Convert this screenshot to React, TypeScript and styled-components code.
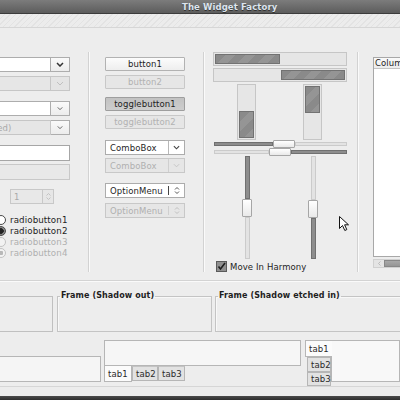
import React from "react";
import styled, { createGlobalStyle } from "styled-components";

const Global = createGlobalStyle`
  html, body { margin: 0; padding: 0; }
  body {
    width: 400px; height: 400px; overflow: hidden; background: #ededed;
    font-family: "DejaVu Sans", "Liberation Sans", sans-serif;
  }
`;

const Window = styled.div`
  position: relative;
  width: 400px;
  height: 400px;
  overflow: hidden;
  display: flex;
  flex-direction: column;
  background: #ededed;
  font-size: 8.5px;
  letter-spacing: 0.1px;
  color: #1e1e1e;
`;

const TitleBar = styled.div`
  flex: none;
  height: 13px;
  border-bottom: 1px solid #3c3c3c;
  background: linear-gradient(#7c7c7c, #5c5c5c);
  display: flex;
  align-items: center;
  padding-left: 182px;
  font-weight: bold;
  font-size: 8.5px;
  color: #dde5ee;
  text-shadow: 0 1px 0 #303030;
`;

const Stripe = styled.div`
  flex: none;
  height: 13px;
  border-bottom: 1px solid #d6d6d6;
  background: repeating-linear-gradient(135deg, #ececec 0 3px, #e3e3e3 3px 4px);
`;

const Body = styled.div`
  flex: none;
  display: flex;
  flex-direction: column;
  margin-left: -35px;
`;

const TopRow = styled.div`
  margin-top: 24px;
  height: 220px;
  display: flex;
  align-items: stretch;
`;

const Column = styled.div<{ $w: number; $pt: number }>`
  flex: none;
  width: ${(p) => p.$w}px;
  padding-top: ${(p) => p.$pt}px;
  display: flex;
  flex-direction: column;
`;

const VSep = styled.div<{ $ml: number; $mr: number }>`
  flex: none;
  width: 1px;
  background: #d2d2d2;
  border-right: 1px solid #fafafa;
  margin: 0 ${(p) => p.$mr}px 0 ${(p) => p.$ml}px;
`;

/* ---------- left column ---------- */

const ComboWrap = styled.div<{ $mt?: number }>`
  display: flex;
  height: 15px;
  margin-top: ${(p) => p.$mt ?? 0}px;
`;

const ComboField = styled.div<{ $dis?: boolean }>`
  flex: 1;
  box-sizing: border-box;
  border: 1px solid ${(p) => (p.$dis ? "#c6c6c6" : "#adadad")};
  background: ${(p) => (p.$dis ? "#e6e6e6" : "#ffffff")};
  color: ${(p) => (p.$dis ? "#a9a9a9" : "#1e1e1e")};
  display: flex;
  align-items: center;
  padding-left: 2px;
  white-space: nowrap;
  overflow: hidden;
`;

const ComboBtn = styled.div<{ $dis?: boolean }>`
  flex: none;
  width: 19px;
  box-sizing: border-box;
  border: 1px solid ${(p) => (p.$dis ? "#c6c6c6" : "#adadad")};
  border-left: none;
  background: ${(p) => (p.$dis ? "#e4e4e4" : "linear-gradient(#fafafa, #ececec)")};
  display: flex;
  align-items: center;
  justify-content: center;
`;

const Entry = styled.div<{ $dis?: boolean; $mt: number }>`
  height: 16px;
  box-sizing: border-box;
  margin-top: ${(p) => p.$mt}px;
  border: 1px solid ${(p) => (p.$dis ? "#c8c8c8" : "#a6a6a6")};
  background: ${(p) => (p.$dis ? "#e8e8e8" : "#ffffff")};
`;

const Spin = styled.div`
  margin: 9px 0 0 45px;
  width: 44px;
  height: 15px;
  display: flex;
`;

const SpinField = styled.div`
  flex: 1;
  box-sizing: border-box;
  border: 1px solid #c8c8c8;
  background: #e8e8e8;
  color: #aaaaaa;
  padding-left: 3px;
  display: flex;
  align-items: center;
`;

const SpinBtns = styled.div`
  flex: none;
  width: 11px;
  box-sizing: border-box;
  border: 1px solid #c8c8c8;
  border-left: none;
  background: #e6e6e6;
  display: flex;
  flex-direction: column;
  align-items: center;
  justify-content: center;
  gap: 1px;
`;

const Radios = styled.div`
  margin: 10px 0 0 31px;
  display: flex;
  flex-direction: column;
`;

const RadioRow = styled.div<{ $dis?: boolean }>`
  height: 11px;
  display: flex;
  align-items: center;
  gap: 4px;
  color: ${(p) => (p.$dis ? "#b0b0b0" : "#1e1e1e")};
  font-size: 8.7px;
`;

const RadioDot = styled.div<{ $on?: boolean; $dis?: boolean }>`
  flex: none;
  width: 10px;
  height: 10px;
  box-sizing: border-box;
  border-radius: 50%;
  border: 1px solid ${(p) => (p.$dis ? "#c2c2c2" : "#4a4a4a")};
  background: ${(p) =>
    p.$on
      ? p.$dis
        ? "radial-gradient(circle, #b8b8b8 0 2px, #f2f2f2 2.5px)"
        : "radial-gradient(circle, #222 0 2.5px, #8a8a8a 3px)"
      : p.$dis
      ? "#f2f2f2"
      : "#ffffff"};
`;

/* ---------- middle column ---------- */

const Button = styled.div<{ $kind?: "dis" | "pressed"; $mt: number }>`
  height: 14px;
  box-sizing: border-box;
  margin-top: ${(p) => p.$mt}px;
  border: 1px solid
    ${(p) => (p.$kind === "dis" ? "#c8c8c8" : p.$kind === "pressed" ? "#9e9e9e" : "#b2b2b2")};
  border-radius: 1px;
  background: ${(p) =>
    p.$kind === "dis"
      ? "#e6e6e6"
      : p.$kind === "pressed"
      ? "linear-gradient(#c2c2c2, #cdcdcd)"
      : "linear-gradient(#fcfcfc, #eeeeee)"};
  color: ${(p) => (p.$kind === "dis" ? "#b2b2b2" : "#1e1e1e")};
  display: flex;
  align-items: center;
  justify-content: center;
`;

const Picker = styled.div<{ $dis?: boolean; $mt: number }>`
  height: 15px;
  box-sizing: border-box;
  margin-top: ${(p) => p.$mt}px;
  border: 1px solid ${(p) => (p.$dis ? "#c8c8c8" : "#acacac")};
  background: ${(p) => (p.$dis ? "#e6e6e6" : "#ffffff")};
  color: ${(p) => (p.$dis ? "#b0b0b0" : "#1e1e1e")};
  display: flex;
  align-items: center;
`;

const PickerText = styled.div`
  flex: 1;
  padding-left: 4px;
  white-space: nowrap;
  overflow: hidden;
`;

const PickerArrow = styled.div<{ $dis?: boolean; $full?: boolean }>`
  flex: none;
  width: 15px;
  align-self: ${(p) => (p.$full ? "stretch" : "center")};
  height: ${(p) => (p.$full ? "auto" : "9px")};
  border-left: 1px solid ${(p) => (p.$dis ? "#cfcfcf" : p.$full ? "#b8b8b8" : "#444")};
  display: flex;
  align-items: center;
  justify-content: center;
`;

/* ---------- sliders column ---------- */

const Progress = styled.div<{ $end?: boolean; $mt: number }>`
  height: 14px;
  box-sizing: border-box;
  margin-top: ${(p) => p.$mt}px;
  border: 1px solid #c6c6c6;
  background: #e6e6e6;
  padding: 1px;
  display: flex;
  justify-content: ${(p) => (p.$end ? "flex-end" : "flex-start")};
`;

const Fill = styled.div`
  box-sizing: border-box;
  border: 1px solid #727272;
  background: repeating-linear-gradient(135deg, #8a8a8a 0 7px, #959595 7px 14px);
`;

const VProgRow = styled.div`
  margin-top: 2px;
  height: 56px;
  display: flex;
`;

const VProg = styled.div<{ $ml: number; $end?: boolean }>`
  width: 19px;
  box-sizing: border-box;
  margin-left: ${(p) => p.$ml}px;
  border: 1px solid #c6c6c6;
  background: #e6e6e6;
  padding: 1px;
  display: flex;
  flex-direction: column;
  justify-content: ${(p) => (p.$end ? "flex-end" : "flex-start")};
`;

const HScale = styled.div`
  height: 8px;
  display: flex;
  align-items: center;
  padding-left: 1px;
`;

const Trough = styled.div<{ $dark?: boolean; $w?: number; $h?: number }>`
  box-sizing: border-box;
  ${(p) => (p.$w !== undefined ? `width: ${p.$w}px;` : "flex: 1;")}
  ${(p) => (p.$h !== undefined ? `height: ${p.$h}px;` : "align-self: stretch;")}
  border: 1px solid ${(p) => (p.$dark ? "#707070" : "#cbcbcb")};
  background: ${(p) => (p.$dark ? "#8d8d8d" : "#e3e3e3")};
`;

const VTrough = styled.div<{ $dark?: boolean; $h?: number }>`
  box-sizing: border-box;
  width: 5px;
  ${(p) => (p.$h !== undefined ? `height: ${p.$h}px; flex: none;` : "flex: 1;")}
  border: 1px solid ${(p) => (p.$dark ? "#707070" : "#cbcbcb")};
  background: ${(p) => (p.$dark ? "#8d8d8d" : "#e3e3e3")};
`;

const Knob = styled.div<{ $w: number; $h: number }>`
  flex: none;
  box-sizing: border-box;
  width: ${(p) => p.$w}px;
  height: ${(p) => p.$h}px;
  border: 1px solid #a6a6a6;
  border-radius: 1px;
  background: linear-gradient(#ffffff, #e9e9e9);
`;

const VScaleRow = styled.div`
  height: 104px;
  display: flex;
`;

const VScale = styled.div<{ $ml: number }>`
  width: 10px;
  margin-left: ${(p) => p.$ml}px;
  display: flex;
  flex-direction: column;
  align-items: center;
`;

const CheckRow = styled.div`
  margin: 3px 0 0 3px;
  height: 10px;
  display: flex;
  align-items: center;
  gap: 3px;
`;

const CheckBox = styled.div`
  width: 11px;
  height: 11px;
  box-sizing: border-box;
  border: 1px solid #5a5a5a;
  background: #8f8f8f;
  display: flex;
  align-items: center;
  justify-content: center;
`;

/* ---------- tree column ---------- */

const TreeBox = styled.div`
  height: 200px;
  box-sizing: border-box;
  border: 1px solid #a8a8a8;
  background: #ffffff;
  display: flex;
  flex-direction: column;
`;

const TreeHeader = styled.div`
  height: 10px;
  border-bottom: 1px solid #c4c4c4;
  background: linear-gradient(#fafafa, #ececec);
  padding-left: 1px;
  display: flex;
  align-items: center;
  white-space: nowrap;
  overflow: hidden;
`;

const HScroll = styled.div`
  margin-top: 2px;
  height: 9px;
  display: flex;
  background: #e4e4e4;
  border: 1px solid #d0d0d0;
  box-sizing: border-box;
`;

const ScrollArrow = styled.div`
  width: 10px;
  display: flex;
  align-items: center;
  justify-content: center;
`;

const ScrollThumb = styled.div`
  flex: 1;
  background: linear-gradient(#a8a8a8, #969696);
  border: 1px solid #888;
`;

/* ---------- lower rows ---------- */

const HSep = styled.div`
  margin-top: 8px;
  height: 1px;
  background: #d3d3d3;
  border-bottom: 1px solid #fafafa;
`;

const FramesRow = styled.div`
  margin-top: 9px;
  height: 41px;
  display: flex;
  align-items: flex-start;
`;

const Frame = styled.fieldset<{ $w: number; $ml: number }>`
  flex: none;
  box-sizing: border-box;
  width: ${(p) => p.$w}px;
  height: 41px;
  margin: 0 0 0 ${(p) => p.$ml}px;
  padding: 0 0 0 2px;
  min-width: 0;
  border: 1px solid #c4c4c4;
  box-shadow: inset 1px 1px 0 #f8f8f8;
`;

const PlainFrame = styled.div<{ $w: number }>`
  flex: none;
  box-sizing: border-box;
  width: ${(p) => p.$w}px;
  height: 36px;
  margin-top: 5px;
  border: 1px solid #c0c0c0;
`;

const FrameLabel = styled.legend`
  padding: 0 1px;
  font-weight: bold;
  font-size: 8px;
  line-height: 10px;
  color: #1e1e1e;
`;

const NotebookRow = styled.div`
  margin-top: 8px;
  height: 46px;
  display: flex;
  align-items: flex-start;
`;

const PlainBook = styled.div`
  flex: none;
  width: 136px;
  height: 26px;
  margin-top: 16px;
  box-sizing: border-box;
  border: 1px solid #b6b6b6;
  background: #f5f5f5;
`;

const BottomBook = styled.div`
  flex: none;
  width: 197px;
  margin-left: 3px;
  display: flex;
  flex-direction: column;
`;

const BookPage = styled.div`
  height: 26px;
  box-sizing: border-box;
  border: 1px solid #b6b6b6;
  background: #f6f6f6;
`;

const TabStrip = styled.div<{ $dir: "row" | "column" }>`
  display: flex;
  flex-direction: ${(p) => p.$dir};
  align-items: flex-start;
`;

const Tab = styled.div<{ $active?: boolean; $w: number; $h: number; $ml?: number }>`
  position: relative;
  flex: none;
  box-sizing: border-box;
  width: ${(p) => p.$w}px;
  height: ${(p) => p.$h}px;
  margin-left: ${(p) => p.$ml ?? 0}px;
  border: 1px solid #b6b6b6;
  background: ${(p) => (p.$active ? "#fbfbfb" : "#e2e2e2")};
  color: #2a2a2a;
  display: flex;
  align-items: center;
  padding-left: 3px;
`;

const BottomTab = styled(Tab)`
  border-top: ${(p) => (p.$active ? "none" : "1px solid #c4c4c4")};
`;

const SideBook = styled.div`
  flex: 1;
  margin-left: 4px;
  display: flex;
  height: 46px;
`;

const SideTabs = styled.div`
  flex: none;
  width: 26px;
  display: flex;
  flex-direction: column;
`;

const SideTab = styled(Tab)`
  z-index: ${(p) => (p.$active ? 1 : 0)};
  border-right: ${(p) => (p.$active ? "none" : "1px solid #b6b6b6")};
`;

const SidePage = styled.div`
  flex: 1;
  height: 42px;
  box-sizing: border-box;
  border: 1px solid #b6b6b6;
  background: #f8f8f8;
`;

const Footer = styled.div`
  flex: none;
  height: 9px;
  border-top: 1px solid #d6d6d6;
  background: #ececec;
`;

const Desk = styled.div`
  flex: 1;
  background: linear-gradient(#4a4a4a, #2e2e2e);
`;

const Cursor = styled.svg`
  position: absolute;
  left: 339px;
  top: 216px;
`;

/* ---------- icons ---------- */

const Chevron = ({ c = "#333", w = 8, sw = 1.5 }: { c?: string; w?: number; sw?: number }) => (
  <svg width={w} height={5} viewBox="0 0 8 5">
    <polyline points="1,1 4,4 7,1" fill="none" stroke={c} strokeWidth={sw} />
  </svg>
);

const UpDown = ({ c = "#555" }: { c?: string }) => (
  <svg width={6} height={9} viewBox="0 0 6 9">
    <polyline points="1,3.5 3,1.5 5,3.5" fill="none" stroke={c} strokeWidth={1} />
    <polyline points="1,5.5 3,7.5 5,5.5" fill="none" stroke={c} strokeWidth={1} />
  </svg>
);

const SmallArrow = ({ up }: { up?: boolean }) => (
  <svg width={5} height={3} viewBox="0 0 5 3">
    <polyline points={up ? "0.5,2.5 2.5,0.5 4.5,2.5" : "0.5,0.5 2.5,2.5 4.5,0.5"} fill="none" stroke="#bdbdbd" strokeWidth={0.9} />
  </svg>
);

export default function App() {
  return (
    <Window>
      <Global />
      <TitleBar>The Widget Factory</TitleBar>
      <Stripe />
      <Body>
        <TopRow>
          <Column $w={105} $pt={5}>
            <ComboWrap>
              <ComboField />
              <ComboBtn>
                <Chevron />
              </ComboBtn>
            </ComboWrap>
            <ComboWrap $mt={4}>
              <ComboField $dis />
              <ComboBtn $dis>
                <Chevron c="#c0c0c0" sw={1} />
              </ComboBtn>
            </ComboWrap>
            <ComboWrap $mt={10}>
              <ComboField />
              <ComboBtn>
                <Chevron c="#555" w={6} sw={1.2} />
              </ComboBtn>
            </ComboWrap>
            <ComboWrap $mt={4}>
              <ComboField $dis>(disabled)</ComboField>
              <ComboBtn>
                <Chevron c="#555" w={6} sw={1.2} />
              </ComboBtn>
            </ComboWrap>
            <Entry $mt={10} />
            <Entry $mt={3} $dis />
            <Spin>
              <SpinField>1</SpinField>
              <SpinBtns>
                <SmallArrow up />
                <SmallArrow />
              </SpinBtns>
            </Spin>
            <Radios>
              <RadioRow>
                <RadioDot />
                radiobutton1
              </RadioRow>
              <RadioRow>
                <RadioDot $on />
                radiobutton2
              </RadioRow>
              <RadioRow $dis>
                <RadioDot $dis />
                radiobutton3
              </RadioRow>
              <RadioRow $dis>
                <RadioDot $dis $on />
                radiobutton4
              </RadioRow>
            </Radios>
          </Column>

          <VSep $ml={18} $mr={15} />

          <Column $w={80} $pt={5}>
            <Button $mt={0}>button1</Button>
            <Button $mt={4} $kind="dis">button2</Button>
            <Button $mt={8} $kind="pressed">togglebutton1</Button>
            <Button $mt={4} $kind="dis">togglebutton2</Button>
            <Picker $mt={11}>
              <PickerText>ComboBox</PickerText>
              <PickerArrow $full>
                <Chevron c="#444" w={7} sw={1.3} />
              </PickerArrow>
            </Picker>
            <Picker $mt={3} $dis>
              <PickerText>ComboBox</PickerText>
              <PickerArrow $full $dis>
                <Chevron c="#c2c2c2" w={7} sw={1} />
              </PickerArrow>
            </Picker>
            <Picker $mt={10}>
              <PickerText>OptionMenu</PickerText>
              <PickerArrow>
                <UpDown />
              </PickerArrow>
            </Picker>
            <Picker $mt={5} $dis>
              <PickerText>OptionMenu</PickerText>
              <PickerArrow $dis>
                <UpDown c="#c0c0c0" />
              </PickerArrow>
            </Picker>
          </Column>

          <VSep $ml={18} $mr={8} />

          <Column $w={134} $pt={0}>
            <Progress $mt={0}>
              <Fill style={{ width: 65 }} />
            </Progress>
            <Progress $mt={2} $end>
              <Fill style={{ width: 64 }} />
            </Progress>
            <VProgRow>
              <VProg $ml={24} $end>
                <Fill style={{ height: 27 }} />
              </VProg>
              <VProg $ml={47}>
                <Fill style={{ height: 27 }} />
              </VProg>
            </VProgRow>
            <HScale>
              <Trough $dark $w={59} $h={4} />
              <Knob $w={22} $h={8} />
              <Trough $h={4} />
            </HScale>
            <HScale>
              <Trough $w={55} $h={4} />
              <Knob $w={22} $h={8} />
              <Trough $dark $h={4} />
            </HScale>
            <VScaleRow>
              <VScale $ml={29}>
                <VTrough $dark $h={43} />
                <Knob $w={10} $h={18} />
                <VTrough />
              </VScale>
              <VScale $ml={56}>
                <VTrough $h={44} />
                <Knob $w={10} $h={18} />
                <VTrough $dark />
              </VScale>
            </VScaleRow>
            <CheckRow>
              <CheckBox>
                <svg width={9} height={9} viewBox="0 0 9 9">
                  <polyline points="1.5,4.5 3.5,7 8,1" fill="none" stroke="#1e1e1e" strokeWidth={1.6} />
                </svg>
              </CheckBox>
              Move In Harmony
            </CheckRow>
          </Column>

          <VSep $ml={10} $mr={14} />

          <Column $w={60} $pt={5}>
            <TreeBox>
              <TreeHeader>Column</TreeHeader>
            </TreeBox>
            <HScroll>
              <ScrollArrow>
                <svg width={3} height={5} viewBox="0 0 3 5">
                  <polyline points="2.5,0.5 0.5,2.5 2.5,4.5" fill="none" stroke="#b0b0b0" strokeWidth={0.8} />
                </svg>
              </ScrollArrow>
              <ScrollThumb />
            </HScroll>
          </Column>
        </TopRow>

        <HSep />

        <FramesRow>
          <PlainFrame $w={88} />
          <Frame $w={155} $ml={4}>
            <FrameLabel>Frame (Shadow out)</FrameLabel>
          </Frame>
          <Frame $w={220} $ml={3}>
            <FrameLabel>Frame (Shadow etched in)</FrameLabel>
          </Frame>
        </FramesRow>

        <NotebookRow>
          <PlainBook />
          <BottomBook>
            <BookPage />
            <TabStrip $dir="row">
              <BottomTab $active $w={28} $h={16}>tab1</BottomTab>
              <BottomTab $w={26} $h={15}>tab2</BottomTab>
              <BottomTab $w={27} $h={15}>tab3</BottomTab>
            </TabStrip>
          </BottomBook>
          <SideBook>
            <SideTabs>
              <SideTab $active $w={27} $h={17}>tab1</SideTab>
              <SideTab $w={24} $h={15} $ml={2}>tab2</SideTab>
              <SideTab $w={24} $h={14} $ml={2}>tab3</SideTab>
            </SideTabs>
            <SidePage />
          </SideBook>
        </NotebookRow>
      </Body>
      <Footer />
      <Desk />
      <Cursor width={11} height={16} viewBox="0 0 11 16">
        <path d="M0.5,0.5 L0.5,12.5 L3.5,9.5 L5.8,14.5 L7.8,13.6 L5.6,8.8 L9.5,8.8 Z" fill="#ffffff" stroke="#111" strokeWidth={1} />
      </Cursor>
    </Window>
  );
}
